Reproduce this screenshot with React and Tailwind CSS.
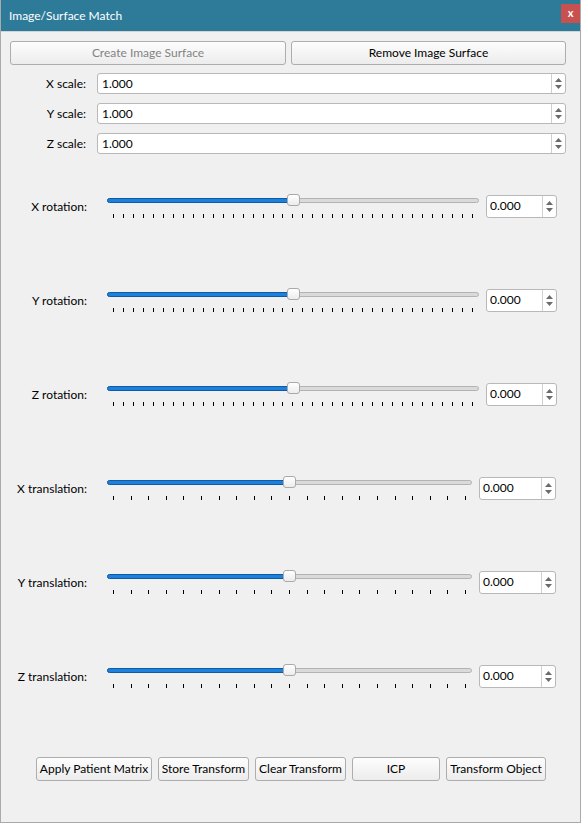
import React from "react";

const FONT = { fontFamily: 'Lato, "Noto Sans", sans-serif' };

function QButton({ children, disabled, className = "" }) {
  return (
    <div
      className={`flex h-[24px] shrink-0 items-center justify-center whitespace-nowrap rounded-[3px] border border-[#adadad] bg-gradient-to-b from-[#fdfdfd] to-[#ececec] text-[12px] leading-none ${
        disabled ? "text-[#838383]" : "text-black"
      } ${className}`}
    >
      {children}
    </div>
  );
}

function SpinArrows() {
  return (
    <div className="flex h-full w-[14px] flex-col items-center justify-center gap-[3px] border-l border-[#d0d0d0]">
      <svg width="7" height="4" viewBox="0 0 7 4">
        <path d="M0 4 L3.5 0 L7 4 Z" fill="#6b6b6b" />
      </svg>
      <svg width="7" height="4" viewBox="0 0 7 4">
        <path d="M0 0 L3.5 4 L7 0 Z" fill="#6b6b6b" />
      </svg>
    </div>
  );
}

function ScaleRow({ label }) {
  return (
    <div className="flex h-[21px] items-center">
      <div className="w-[86px] shrink-0 pr-[1px] text-right text-[12px] text-black">{label}</div>
      <div className="ml-[10px] flex h-full w-[469px] shrink-0 items-center rounded-[3px] border border-[#b8b8b8] bg-white">
        <div className="flex-1 pl-[4px] text-[12px] text-black">1.000</div>
        <SpinArrows />
      </div>
    </div>
  );
}

function SliderRow({ label, trackW, ticks, tickW, spinW }) {
  const handleLeft = (trackW - 13) / 2;
  return (
    <div className="flex h-[24px] items-center">
      <div className="w-[86px] shrink-0 pt-[1px] text-right text-[12px] text-black">{label}</div>
      <div className="ml-[20px] flex h-full shrink-0 flex-col" style={{ width: trackW }}>
        <div className="relative h-[12px]">
          <div className="absolute left-0 right-0 top-[4px] h-[5px] rounded-full border border-[#b3b3b3] bg-[#dadada]" />
          <div
            className="absolute left-0 top-[4px] h-[5px] rounded-full border border-[#0d5aa5] bg-[#1e80dd]"
            style={{ width: handleLeft + 4 }}
          />
          <div
            className="absolute top-0 h-[12px] w-[13px] rounded-[3px] border border-[#a9a9a9] bg-gradient-to-b from-white to-[#ececec]"
            style={{ left: handleLeft }}
          />
        </div>
        <div className="ml-[6px] mt-[8px] flex h-[4px] justify-between" style={{ width: tickW }}>
          {Array.from({ length: ticks }).map((_, i) => (
            <div key={i} className="h-[4px] w-[1px] bg-black" />
          ))}
        </div>
      </div>
      <div
        className="ml-[7px] flex h-[23px] shrink-0 items-center rounded-[3px] border border-[#b8b8b8] bg-white"
        style={{ width: spinW }}
      >
        <div className="flex-1 pl-[3px] text-[12px] text-black">0.000</div>
        <SpinArrows />
      </div>
    </div>
  );
}

export default function App() {
  const rot = { trackW: 372, ticks: 37, tickW: 360, spinW: 71 };
  const tr = { trackW: 365, ticks: 21, tickW: 353, spinW: 77 };
  return (
    <div
      className="flex h-[823px] w-[581px] flex-col border-b border-l border-r border-[#aaaaaa] bg-[#f0f0f0]"
      style={FONT}
    >
      {/* Title bar */}
      <div className="flex h-[31px] items-center justify-between bg-[#2e7b99] pl-[8px]">
        <span className="text-[12px] text-white">Image/Surface Match</span>
        <div className="mb-[5px] flex h-[19px] w-[19px] items-center justify-center bg-[#c8504f] text-[11px] font-bold text-white">
          x
        </div>
      </div>
      <div className="h-[1px] bg-[#d4d4d4]" />

      {/* Surface buttons */}
      <div className="mt-[9px] flex gap-[5px] pl-[9px]">
        <QButton disabled className="w-[276px]">
          Create Image Surface
        </QButton>
        <QButton className="w-[275px]">Remove Image Surface</QButton>
      </div>

      {/* Scale inputs */}
      <div className="mt-[8px] flex flex-col gap-[9px]">
        <ScaleRow label="X scale:" />
        <ScaleRow label="Y scale:" />
        <ScaleRow label="Z scale:" />
      </div>

      {/* Sliders */}
      <div className="mt-[40px] flex flex-col gap-[70px]">
        <SliderRow label="X rotation:" {...rot} />
        <SliderRow label="Y rotation:" {...rot} />
        <SliderRow label="Z rotation:" {...rot} />
        <SliderRow label="X translation:" {...tr} />
        <SliderRow label="Y translation:" {...tr} />
        <SliderRow label="Z translation:" {...tr} />
      </div>

      {/* Bottom buttons */}
      <div className="mt-[69px] flex gap-[6px] pl-[35px]">
        <QButton className="w-[116px]">Apply Patient Matrix</QButton>
        <QButton className="w-[91px]">Store Transform</QButton>
        <QButton className="w-[91px]">Clear Transform</QButton>
        <QButton className="w-[88px]">ICP</QButton>
        <QButton className="w-[100px]">Transform Object</QButton>
      </div>
    </div>
  );
}
